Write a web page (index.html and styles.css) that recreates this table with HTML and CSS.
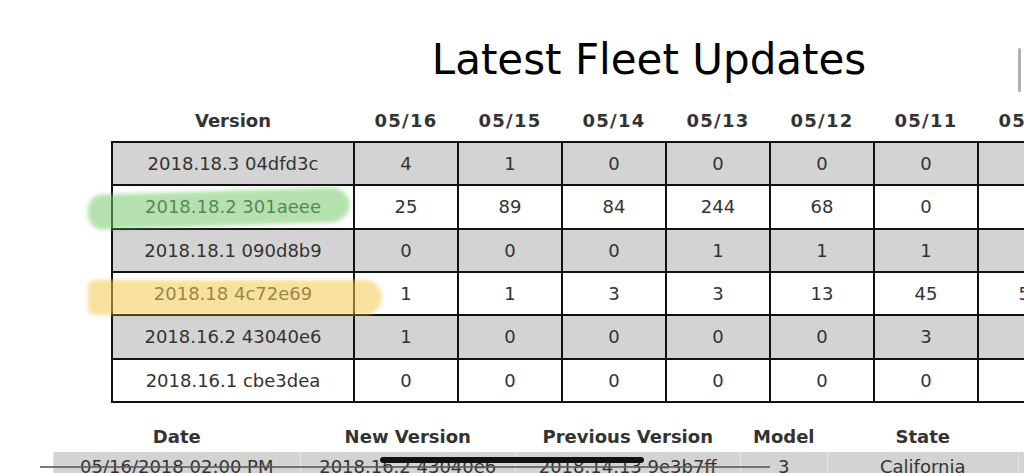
FILE: index.html
```html
<html>

<head>
    <meta charset="utf-8">
    <title>Latest Fleet Updates</title>
    <link rel="stylesheet" href="styles.css">
</head>

<body>
    <div class="page">
        <h1 class="title">Latest Fleet Updates</h1>

        <!-- daily counts per firmware version -->
        <table class="fleet">
            <colgroup>
                <col class="versionCol">
                <col class="dayCol"><col class="dayCol"><col class="dayCol"><col class="dayCol">
                <col class="dayCol"><col class="dayCol"><col class="dayCol"><col class="dayCol">
            </colgroup>
            <thead>
                <tr>
                    <th>Version</th>
                    <th class="day">05/16</th>
                    <th class="day">05/15</th>
                    <th class="day">05/14</th>
                    <th class="day">05/13</th>
                    <th class="day">05/12</th>
                    <th class="day">05/11</th>
                    <th class="day">05/10</th>
                    <th class="day">05/09</th>
                </tr>
            </thead>
            <tbody>
                <tr>
                    <td>2018.18.3 04dfd3c</td>
                    <td>4</td><td>1</td><td>0</td><td>0</td><td>0</td><td>0</td><td>0</td><td>0</td>
                </tr>
                <tr>
                    <td>2018.18.2 301aeee</td>
                    <td>25</td><td>89</td><td>84</td><td>244</td><td>68</td><td>0</td><td>0</td><td>0</td>
                </tr>
                <tr>
                    <td>2018.18.1 090d8b9</td>
                    <td>0</td><td>0</td><td>0</td><td>1</td><td>1</td><td>1</td><td>1</td><td>0</td>
                </tr>
                <tr>
                    <td>2018.18 4c72e69</td>
                    <td>1</td><td>1</td><td>3</td><td>3</td><td>13</td><td>45</td><td>57</td><td>38</td>
                </tr>
                <tr>
                    <td>2018.16.2 43040e6</td>
                    <td>1</td><td>0</td><td>0</td><td>0</td><td>0</td><td>3</td><td>1</td><td>2</td>
                </tr>
                <tr>
                    <td>2018.16.1 cbe3dea</td>
                    <td>0</td><td>0</td><td>0</td><td>0</td><td>0</td><td>0</td><td>1</td><td>0</td>
                </tr>
            </tbody>
        </table>

        <!-- individual update log -->
        <table class="history">
            <colgroup>
                <col class="dateCol">
                <col class="newCol">
                <col class="prevCol">
                <col class="modelCol">
                <col class="stateCol">
                <col class="countryCol">
            </colgroup>
            <thead>
                <tr>
                    <th>Date</th>
                    <th>New Version</th>
                    <th>Previous Version</th>
                    <th>Model</th>
                    <th>State</th>
                    <th>Country</th>
                </tr>
            </thead>
            <tbody>
                <tr>
                    <td>05/16/2018 02:00 PM</td>
                    <td>2018.16.2 43040e6</td>
                    <td>2018.14.13 9e3b7ff</td>
                    <td>3</td>
                    <td>California</td>
                    <td>USA</td>
                </tr>
                <tr>
                    <td>05/16/2018 01:00 PM</td>
                    <td>2018.18.2 301aeee</td>
                    <td>2018.18 4c72e69</td>
                    <td>S</td>
                    <td>Texas</td>
                    <td>USA</td>
                </tr>
            </tbody>
        </table>
    </div>

    <!-- marks drawn over the screenshot -->
    <div class="marker greenMark"></div>
    <div class="marker yellowMark"></div>
    <div class="scrollThumb"></div>
    <div class="hairline"></div>
    <div class="homeBar"></div>
</body>

</html>
```

FILE: styles.css
```css
html,
body {
    margin: 0;
    overflow: hidden;
    background: #fff;
}

body {
    font-family: "DejaVu Sans", Verdana, sans-serif;
    color: #333;
}

.page {
    width: 1298px;
}

.title {
    margin: 35px 0 15px 0;
    font-size: 42px;
    line-height: 49px;
    font-weight: normal;
    text-align: center;
    color: #000;
}

/* fleet table */

.fleet {
    margin: 0 auto;
    width: 1074px;
    table-layout: fixed;
    border-collapse: collapse;
    font-size: 18px;
}

.versionCol {
    width: 242px;
}

.dayCol {
    width: 104px;
}

.fleet th {
    height: 43px;
    padding: 0;
    font-weight: bold;
}

.fleet th.day {
    letter-spacing: 1.3px;
}

.fleet td {
    height: 43.33px;
    padding: 0;
    text-align: center;
    border: 2px solid #111;
}

.fleet tbody tr:nth-child(odd) td {
    background: #d3d3d3;
}

/* history table */

.history {
    margin: 19px auto 0 auto;
    width: 1192px;
    table-layout: fixed;
    border-collapse: collapse;
    font-size: 18px;
}

.dateCol {
    width: 247px;
}

.newCol {
    width: 215px;
}

.prevCol {
    width: 225px;
}

.modelCol {
    width: 87px;
}

.stateCol {
    width: 191px;
}

.countryCol {
    width: 227px;
}

.history th {
    height: 30px;
    padding: 0;
    font-weight: bold;
}

.history td {
    height: 30px;
    padding: 0;
    text-align: center;
    border-left: 1px solid #e4e4e4;
}

.history tbody tr:nth-child(odd) td {
    background: #d3d3d3;
}

/* overlays */

.marker {
    position: absolute;
    filter: blur(2px);
}

.greenMark {
    left: 88px;
    top: 191px;
    width: 262px;
    height: 35px;
    background: rgba(120, 200, 110, 0.55);
    border-radius: 14px 20px 20px 14px / 16px 18px 18px 16px;
    transform: rotate(-1.8deg);
}

.yellowMark {
    left: 88px;
    top: 280px;
    width: 294px;
    height: 35px;
    background: rgba(240, 200, 80, 0.55);
    border-radius: 6px 18px 18px 6px;
}

.scrollThumb {
    position: absolute;
    left: 1018px;
    top: 48px;
    width: 3px;
    height: 44px;
    border-radius: 2px;
    background: #b0b0b0;
}

.hairline {
    position: absolute;
    left: 40px;
    top: 466px;
    width: 730px;
    height: 2px;
    background: rgba(90, 90, 90, 0.8);
}

.homeBar {
    position: absolute;
    left: 380px;
    top: 457px;
    width: 264px;
    height: 6px;
    border-radius: 3px;
    background: #111;
}
```
